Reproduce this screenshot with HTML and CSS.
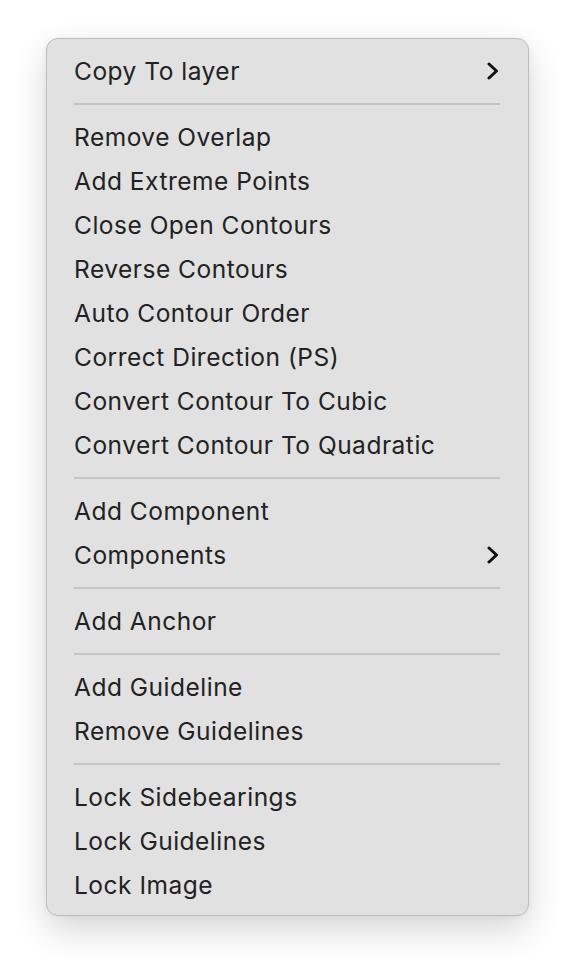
FILE: index.html
```html
<!DOCTYPE html>
<html>
<head>
<meta charset="utf-8">
<link rel="stylesheet" href="styles.css">
</head>
<body>
<div class="menu">
  <div class="item"><span>Copy To layer</span><svg class="chev" viewBox="0 0 12 18" width="12" height="18"><path d="M2 2 L9.5 9 L2 16" fill="none" stroke="#111" stroke-width="3" stroke-linecap="round" stroke-linejoin="round"/></svg></div>
  <div class="sep"></div>
  <div class="item"><span>Remove Overlap</span></div>
  <div class="item"><span>Add Extreme Points</span></div>
  <div class="item"><span>Close Open Contours</span></div>
  <div class="item"><span>Reverse Contours</span></div>
  <div class="item"><span>Auto Contour Order</span></div>
  <div class="item"><span>Correct Direction (PS)</span></div>
  <div class="item"><span>Convert Contour To Cubic</span></div>
  <div class="item"><span>Convert Contour To Quadratic</span></div>
  <div class="sep"></div>
  <div class="item"><span>Add Component</span></div>
  <div class="item"><span>Components</span><svg class="chev" viewBox="0 0 12 18" width="12" height="18"><path d="M2 2 L9.5 9 L2 16" fill="none" stroke="#111" stroke-width="3" stroke-linecap="round" stroke-linejoin="round"/></svg></div>
  <div class="sep"></div>
  <div class="item"><span>Add Anchor</span></div>
  <div class="sep"></div>
  <div class="item"><span>Add Guideline</span></div>
  <div class="item"><span>Remove Guidelines</span></div>
  <div class="sep"></div>
  <div class="item"><span>Lock Sidebearings</span></div>
  <div class="item"><span>Lock Guidelines</span></div>
  <div class="item"><span>Lock Image</span></div>
</div>
</body>
</html>
```
FILE: styles.css
```css
html, body {
  margin: 0;
  padding: 0;
  background: #ffffff;
}
body {
  min-height: 970px;
  box-sizing: border-box;
  padding: 38px 0 0 46px;
  font-family: Inter, "Noto Sans", sans-serif;
}
.menu {
  width: 483px;
  box-sizing: border-box;
  background: #e0e1e0;
  border: 1px solid #bdbdbd;
  border-radius: 12px;
  padding: 10px 28px 8px 27px;
  box-shadow: 0 14px 34px rgba(0, 0, 0, 0.16), 0 0 6px rgba(0, 0, 0, 0.06);
}
.item {
  height: 44px;
  display: flex;
  align-items: center;
  justify-content: space-between;
  font-size: 24.5px;
  color: #222222;
  letter-spacing: 0.5px;
}
.chev {
  margin-right: 1px;
}
.sep {
  height: 22px;
  display: flex;
  align-items: center;
}
.sep::before {
  content: "";
  display: block;
  width: 100%;
  height: 2px;
  background: #c6c6c6;
}
```
